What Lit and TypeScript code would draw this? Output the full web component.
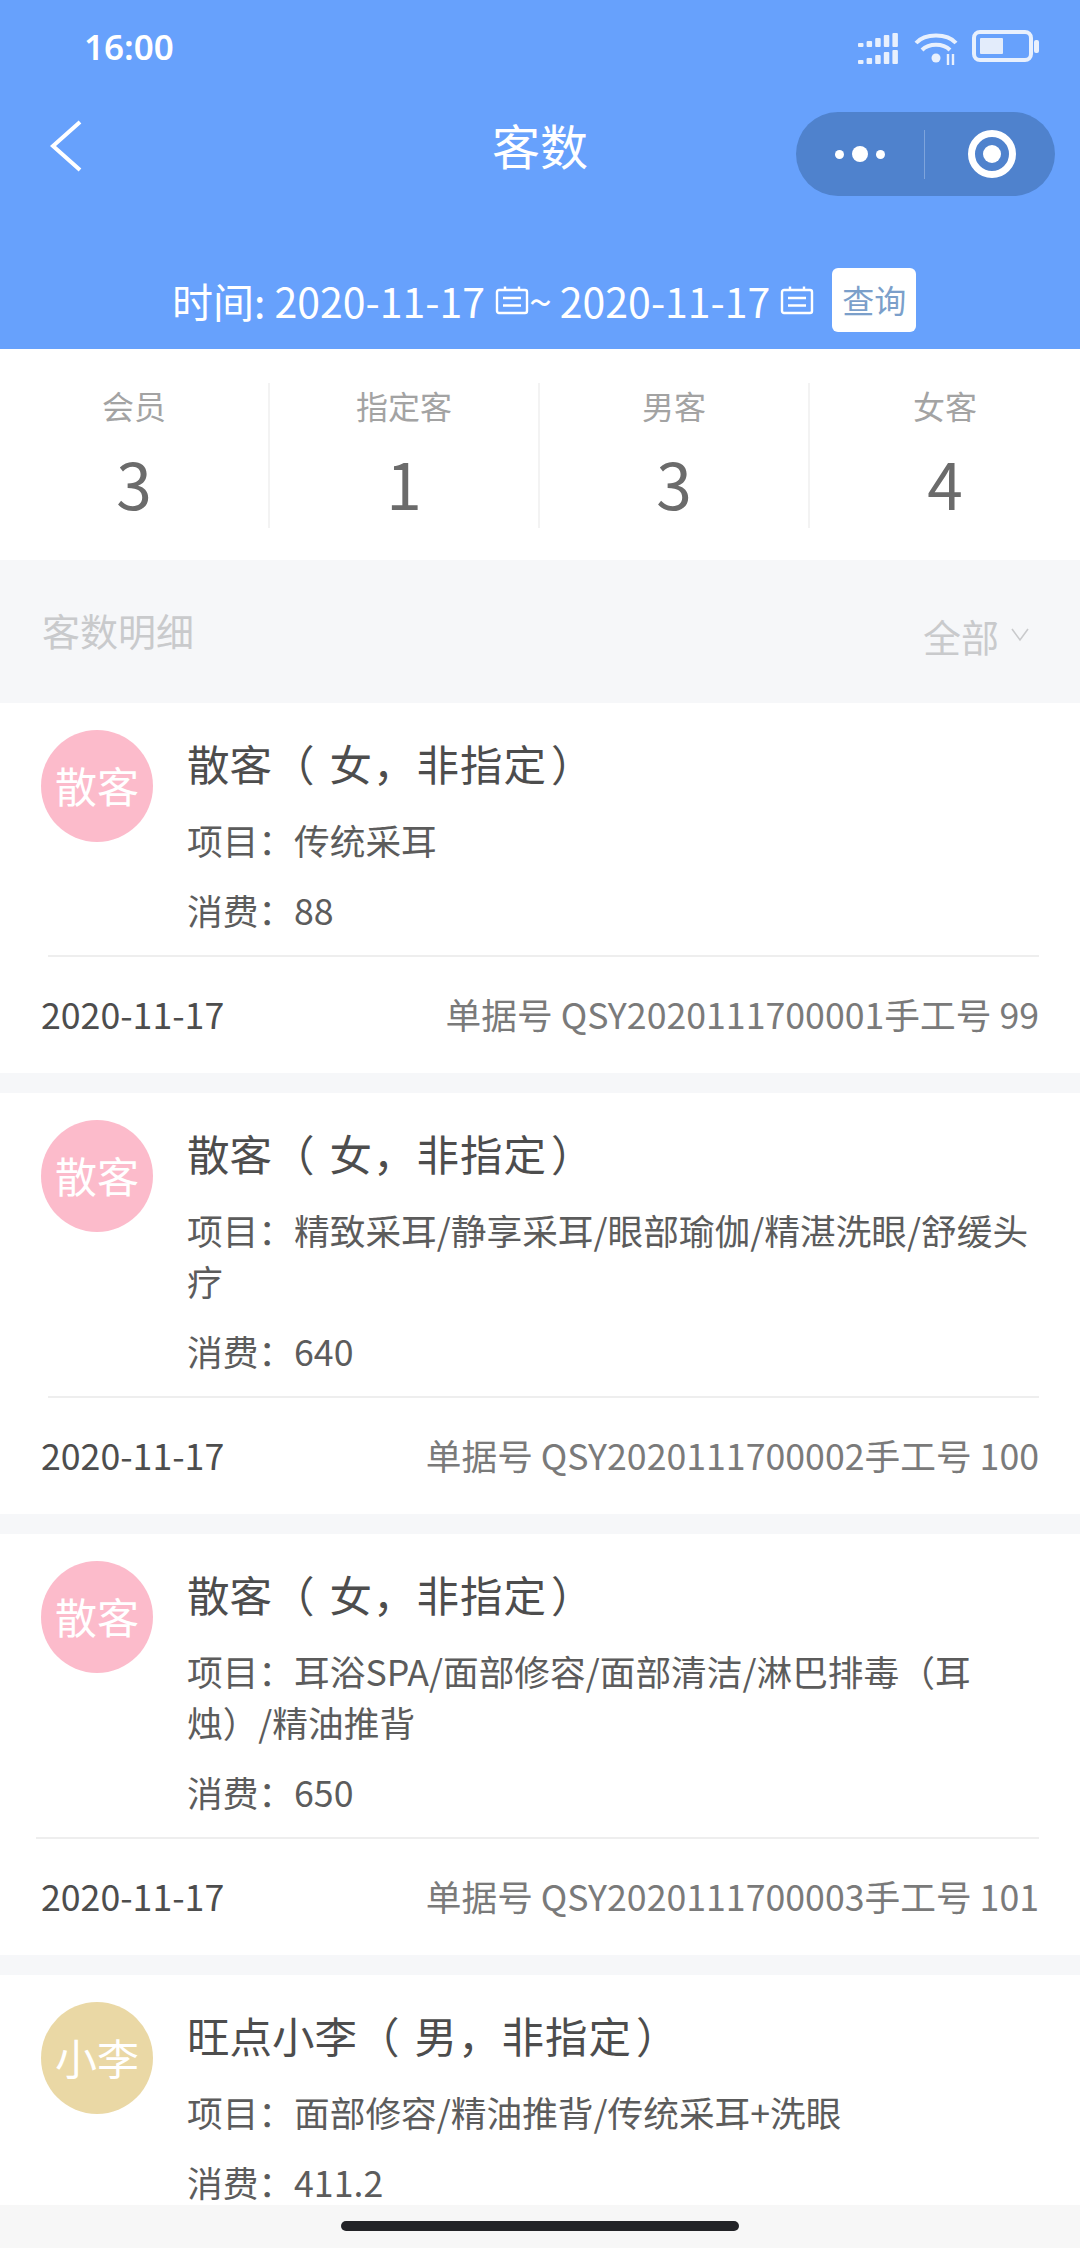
import { LitElement, html, css, svg } from 'lit';
import { customElement } from 'lit/decorators.js';
import { classMap } from 'lit/directives/class-map.js';

type Order = {
  badge: string;
  tone: string;
  name: string;
  meta: string;
  items: string;
  cost: string;
  no: string;
  manual: string;
  wide?: boolean;
};

const STATS = [
  { label: '会员', value: '3' },
  { label: '指定客', value: '1' },
  { label: '男客', value: '3' },
  { label: '女客', value: '4' },
];

const ORDERS: Order[] = [
  { badge: '散客', tone: 'pink', name: '散客', meta: '女，非指定', items: '传统采耳', cost: '88', no: 'QSY2020111700001', manual: '99' },
  { badge: '散客', tone: 'pink', name: '散客', meta: '女，非指定', items: '精致采耳/静享采耳/眼部瑜伽/精湛洗眼/舒缓头疗', cost: '640', no: 'QSY2020111700002', manual: '100' },
  { badge: '散客', tone: 'pink', name: '散客', meta: '女，非指定', items: '耳浴SPA/面部修容/面部清洁/淋巴排毒（耳烛）/精油推背', cost: '650', no: 'QSY2020111700003', manual: '101', wide: true },
  { badge: '小李', tone: 'tan', name: '旺点小李', meta: '男，非指定', items: '面部修容/精油推背/传统采耳+洗眼', cost: '411.2', no: 'QSY2020111700004', manual: '102' },
];

const calendar = svg`<svg class="cal" width="34" height="30" viewBox="0 0 34 30" fill="none" stroke="#fff" stroke-width="2.4">
  <rect x="2" y="5" width="30" height="23" rx="2"/>
  <path d="M10 1.5V5M24 1.5V5M8 13H26M8 20.5H26"/>
</svg>`;

@customElement('app-root')
export class AppRoot extends LitElement {
  static styles = css`
    :host {
      display: block;
      position: relative;
      width: 1080px;
      height: 2248px;
      overflow: hidden;
      background: #f6f7f9;
      font-family: "Noto Sans CJK SC", "Noto Sans", sans-serif;
    }

    .head {
      height: 349px;
      background: #67a1fc;
      color: #fff;
      box-sizing: border-box;
    }

    .status {
      height: 112px;
      display: flex;
      justify-content: space-between;
      padding: 25px 39px 0 84px;
      box-sizing: border-box;
    }

    .time {
      font-family: "Noto Sans", sans-serif;
      font-size: 35px;
      font-weight: 600;
      line-height: 44px;
    }

    .sys {
      display: block;
      margin-top: 5px;
    }

    .nav {
      display: grid;
      grid-template-columns: 1fr auto 1fr;
      height: 84px;
      padding: 0 25px;
    }

    .back {
      display: block;
      margin: 8px 0 0 25px;
    }

    .title {
      font-size: 48px;
      line-height: 64px;
    }

    .capsule {
      justify-self: end;
      width: 259px;
      height: 84px;
      border-radius: 42px;
      background: #4f82cd;
      display: flex;
      align-items: center;
    }

    .more {
      width: 129px;
      height: 49px;
      border-right: 1px solid #7ea4dc;
      display: flex;
      align-items: center;
      justify-content: center;
      gap: 8px;
      box-sizing: border-box;
    }

    .more i {
      width: 9px;
      height: 9px;
      border-radius: 50%;
      background: #fff;
    }

    .more i.big {
      width: 16px;
      height: 16px;
    }

    .scan {
      width: 48px;
      height: 48px;
      margin-left: 43px;
      border: 7px solid #fff;
      border-radius: 50%;
      box-sizing: border-box;
      display: flex;
      align-items: center;
      justify-content: center;
    }

    .scan i {
      width: 18px;
      height: 18px;
      border-radius: 50%;
      background: #fff;
    }

    .range {
      display: flex;
      align-items: center;
      height: 64px;
      margin-top: 72px;
      padding-left: 172px;
      font-size: 41px;
      line-height: 70px;
    }

    .range .date {
      margin-right: 10px;
    }

    .range .tilde {
      margin-right: 8px;
    }

    .range .cal {
      flex: none;
    }

    .query {
      width: 84px;
      height: 64px;
      margin-left: 18px;
      border-radius: 6px;
      background: #fff;
      color: #7b9fca;
      font-size: 32px;
      line-height: 62px;
      text-align: center;
    }

    .stats {
      display: grid;
      grid-template-columns: repeat(4, 270px);
      padding: 34px 0 32px;
      background: #fff;
    }

    .stat {
      height: 145px;
      border-right: 2px solid #f3f3f3;
      text-align: center;
    }

    .stat:last-child {
      border-right: 0;
    }

    .stat .label {
      font-size: 32px;
      line-height: 44px;
      color: #a3a3a3;
    }

    .stat .value {
      margin-top: 15px;
      font-size: 64px;
      line-height: 80px;
      color: #6b6b6b;
    }

    .bar {
      height: 143px;
      display: flex;
      align-items: center;
      justify-content: space-between;
      padding: 0 51px 5px 42px;
      box-sizing: border-box;
      color: #c9cacc;
    }

    .bar .name {
      font-size: 38px;
    }

    .filter {
      display: flex;
      align-items: center;
      gap: 12px;
      padding-top: 12px;
      font-size: 38px;
    }

    .list {
      display: flex;
      flex-direction: column;
      gap: 20px;
    }

    .card {
      background: #fff;
      padding-top: 27px;
    }

    .top {
      display: flex;
      padding: 0 41px;
      gap: 34px;
    }

    .avatar {
      flex: none;
      width: 112px;
      height: 112px;
      border-radius: 50%;
      color: #fff;
      font-size: 42px;
      line-height: 110px;
      text-align: center;
    }

    .avatar.pink {
      background: #fcbbcb;
    }

    .avatar.tan {
      background: #ead8a5;
    }

    .info {
      flex: 1;
      min-width: 0;
    }

    .name-line {
      font-size: 42.5px;
      line-height: 65px;
      color: #4d4d4d;
    }

    .open {
      margin-right: 15px;
    }

    .meta {
      letter-spacing: 1px;
    }

    .close {
      margin-left: 4px;
    }

    .line {
      font-size: 35.7px;
      line-height: 51px;
      color: #5c5c5c;
    }

    .line.items {
      margin-top: 19px;
    }

    .line.cost {
      margin-top: 19px;
    }

    .rule {
      height: 2px;
      margin: 20px 41px 0 48px;
      background: #eeeeee;
    }

    .rule.wide {
      margin-left: 36px;
    }

    .foot {
      display: flex;
      justify-content: space-between;
      padding: 29px 41px 31px;
      font-size: 35.7px;
      line-height: 56px;
      color: #4d4d4d;
    }

    .foot .ref {
      color: #7a7a7a;
    }

    .home {
      position: absolute;
      left: 0;
      right: 0;
      bottom: 0;
      height: 43px;
      background: #f7f7f7;
    }

    .home i {
      display: block;
      width: 398px;
      height: 10px;
      margin: 16px auto 0;
      border-radius: 5px;
      background: #222327;
    }
  `;

  renderStatusIcons() {
    const bars = [4, 6, 9, 12, 14];
    return html`<svg class="sys" width="184" height="36" viewBox="0 0 184 36" fill="#fff">
      <g fill="#e8f0fd">
        ${bars.map((h, i) => svg`
          <rect x=${1 + i * 8.6} y=${17 - h} width="5.5" height=${h} rx="1"/>
          <rect x=${1 + i * 8.6} y=${34 - h} width="5.5" height=${h} rx="1"/>
        `)}
      </g>
      <g fill="none" stroke="#e8f0fd" stroke-width="4">
        <path d="M59 13C68 3 90 3 99 13"/>
        <path d="M65 20C72 13 86 13 93 20"/>
      </g>
      <circle cx="79" cy="28" r="4.5" fill="#e8f0fd"/>
      <path d="M91 24V35M96 24V35" stroke="#e8f0fd" stroke-width="2.4"/>
      <rect x="117" y="2" width="57" height="28" rx="6" fill="none" stroke="#e8f0fd" stroke-width="4"/>
      <rect x="123" y="8" width="23" height="16" rx="1" fill="#e3ecfb"/>
      <rect x="177" y="10" width="5" height="13" rx="2" fill="#e8f0fd"/>
    </svg>`;
  }

  renderOrder(o: Order) {
    return html`
      <div class="card">
        <div class="top">
          <div class=${classMap({ avatar: true, [o.tone]: true })}>${o.badge}</div>
          <div class="info">
            <div class="name-line">${o.name}<span class="open">（</span><span class="meta">${o.meta}</span><span class="close">）</span></div>
            <div class="line items">项目：${o.items}</div>
            <div class="line cost">消费：${o.cost}</div>
          </div>
        </div>
        <div class=${classMap({ rule: true, wide: !!o.wide })}></div>
        <div class="foot">
          <span>2020-11-17</span>
          <span class="ref">单据号 ${o.no}手工号 ${o.manual}</span>
        </div>
      </div>
    `;
  }

  render() {
    return html`
      <div class="head" lang="zh-CN">
        <div class="status">
          <span class="time">16:00</span>
          ${this.renderStatusIcons()}
        </div>
        <div class="nav">
          <svg class="back" width="34" height="54" viewBox="0 0 34 54" fill="none" stroke="#fff" stroke-width="4">
            <path d="M30 2L3 26L30 50"/>
          </svg>
          <span class="title">客数</span>
          <div class="capsule">
            <div class="more"><i></i><i class="big"></i><i></i></div>
            <div class="scan"><i></i></div>
          </div>
        </div>
        <div class="range">
          <span>时间:&nbsp;</span>
          <span class="date">2020-11-17</span>
          ${calendar}
          <span class="tilde">~</span>
          <span class="date">2020-11-17</span>
          ${calendar}
          <span class="query">查询</span>
        </div>
      </div>
      <div class="stats" lang="zh-CN">
        ${STATS.map(s => html`
          <div class="stat">
            <div class="label">${s.label}</div>
            <div class="value">${s.value}</div>
          </div>
        `)}
      </div>
      <div class="bar" lang="zh-CN">
        <span class="name">客数明细</span>
        <span class="filter">全部
          <svg width="18" height="14" viewBox="0 0 18 14" fill="none" stroke="#c9cacc" stroke-width="1.6">
            <path d="M1 1L9 12L17 1"/>
          </svg>
        </span>
      </div>
      <div class="list" lang="zh-CN">
        ${ORDERS.map(o => this.renderOrder(o))}
      </div>
      <div class="home"><i></i></div>
    `;
  }
}
